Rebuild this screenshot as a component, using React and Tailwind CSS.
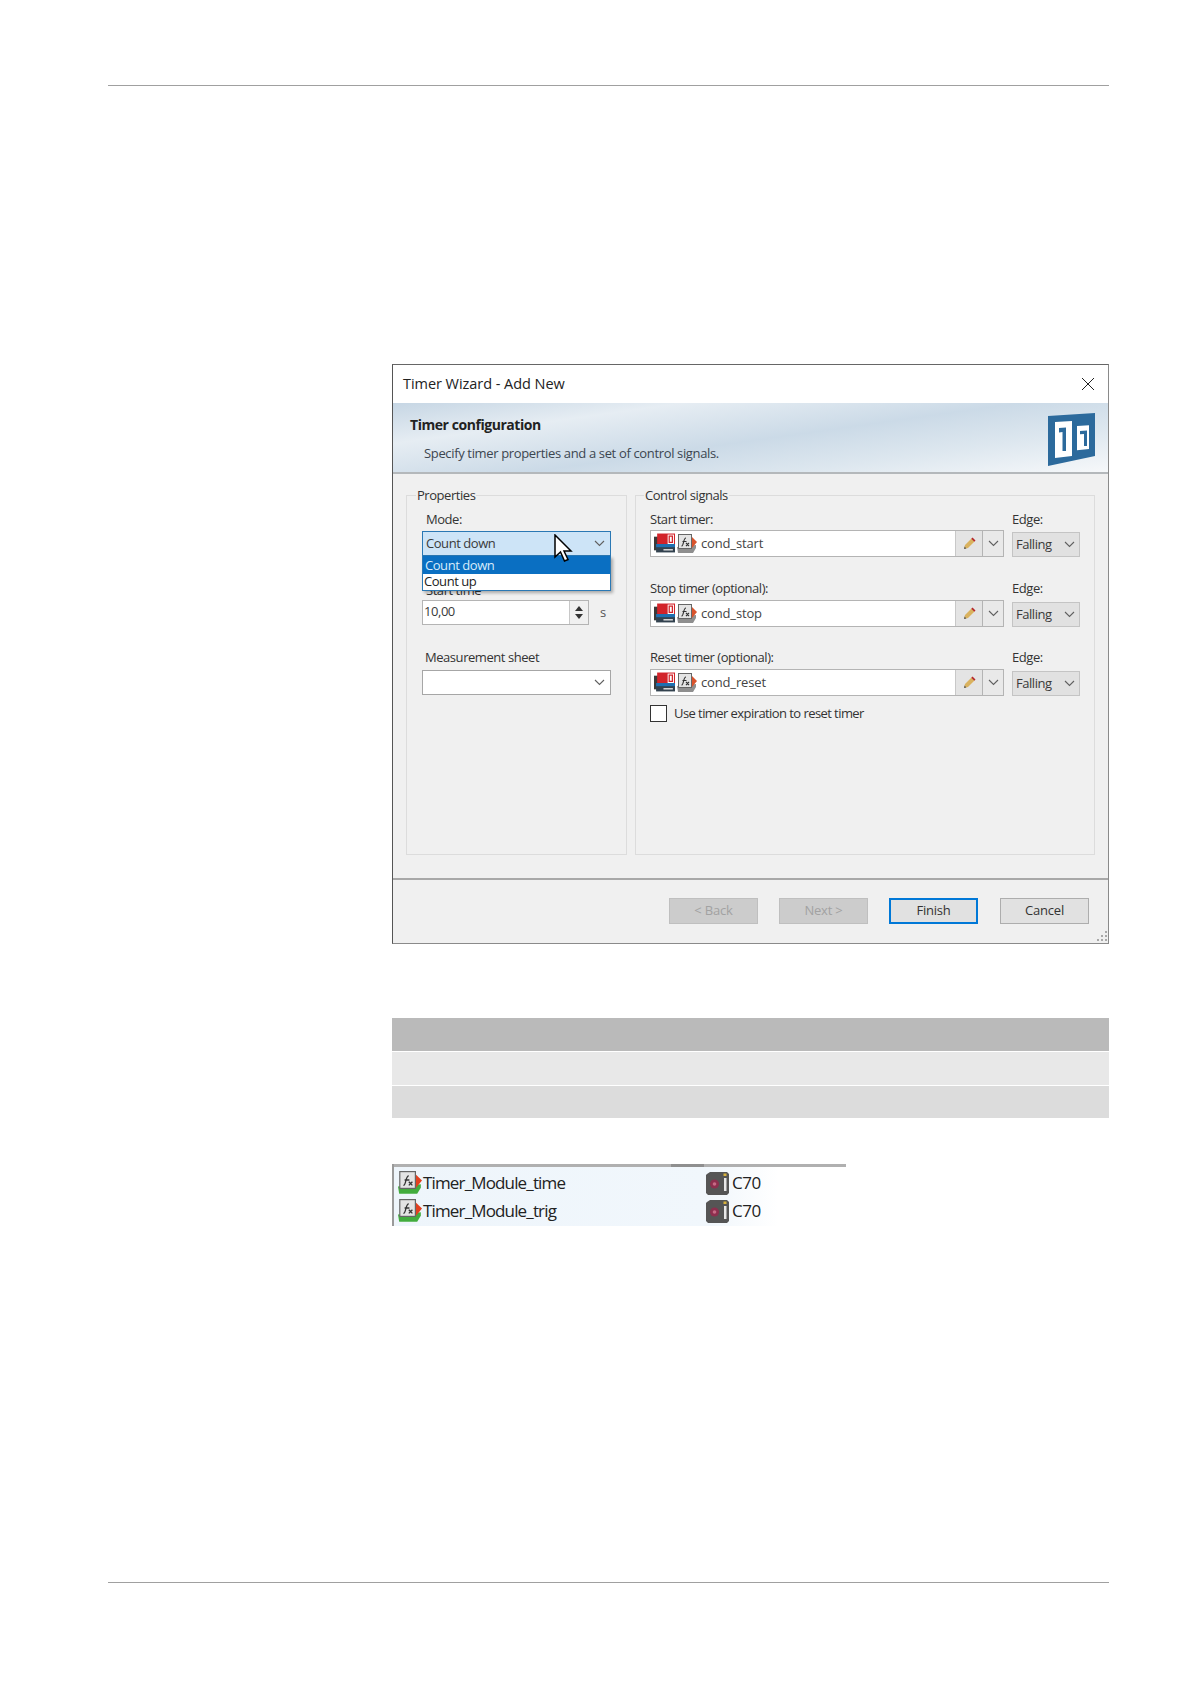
const font = "font-['Open_Sans','Noto_Sans',sans-serif]";

const Chevron = ({ className = "" }) => (
    <svg width="11" height="7" viewBox="0 0 11 7" className={className}>
        <path d="M1 1l4.5 4.5L10 1" fill="none" stroke="#606060" strokeWidth="1.1" />
    </svg>
);

// red/blue memory block in front of each signal
const SourceIcon = () => (
    <svg width="21" height="21" viewBox="1 1 20 19" className="shrink-0">
        <path d="M1 4h6v13H1z" fill="#3a3a3a" />
        <path d="M4 1h17v12H4z" fill="#d2232a" />
        <rect x="14" y="2" width="6" height="9" fill="#fff" />
        <path d="M15.500 3.500h3v6h-3z" fill="none" stroke="#d2232a" strokeWidth="1.2" />
        <path d="M3 11h18v4H3z" fill="#1f6fb0" />
        <path d="M3 14h18v5H3z" fill="#33424f" />
        <path d="M10 16.500h9" stroke="#e6e6e6" strokeWidth="1.3" />
    </svg>
);

const FormulaIcon = ({ bottom = "#8f8f8f", side = "#d9532c", size = 20 }) => (
    <svg width={size} height={size} viewBox="1 0 20 20" className="shrink-0">
        <path d="M1 13l1 6h15l3-5v-3z" fill={bottom} />
        <path d="M15 2l6 6-5 6h-2z" fill={side} />
        <rect x="2.500" y="0.500" width="13" height="14" fill="#e4e4e4" stroke="#666" />
        <path d="M5.500 12c2.500 0 1.500-8 4.500-8M6.500 7.500h4M10 9l3 3M13 9l-3 3" fill="none" stroke="#333" strokeWidth="1.100" />
    </svg>
);

const Pencil = () => (
    <svg width="15" height="15" viewBox="0 0 15 15">
        <path d="M2 13l1-4 6.500-6.500 3 3L6 12z" fill="#d9b25f" />
        <path d="M2 13l.6-2.400 1.800 1.800z" fill="#555" />
        <path d="M10.500 1.500l3 3-1.200 1.200-3-3z" fill="#b5262b" />
    </svg>
);

const Cursor = () => (
    <svg width="20" height="29" viewBox="0 0 20 29">
        <path d="M2 1v22l5.500-5 4 9 3.500-1.500-4-8.500H18z" fill="#fff" stroke="#000" strokeWidth="1.500" />
    </svg>
);

const Logo = () => (
    <svg width="48" height="54" viewBox="0 0 48 54">
        <path d="M0 3L47 0v43L0 53z" fill="#2c6a9c" />
        <path d="M7 9l17-1v35L7 45z" fill="#fff" />
        <path d="M11 15l7-.5V38h-3.500V19L11 19.500z" fill="#2c6a9c" />
        <path d="M29 13l12-.7V36l-12 1.200z" fill="#fff" />
        <path d="M32 18l7-.5V33h-3V21l-4 .3z" fill="#2c6a9c" />
    </svg>
);

const DeviceIcon = () => (
    <svg width="25" height="25" viewBox="0 0 25 25" className="shrink-0">
        <path d="M2 3l3-2h17l2 2v19l-2 2H3l-2-2V4z" fill="#555" />
        <circle cx="9.500" cy="13" r="4.500" fill="#8d2f4e" />
        <circle cx="9.500" cy="13" r="1.800" fill="#c66a85" />
        <rect x="19" y="7" width="2.500" height="13" fill="#e8e8e8" />
        <rect x="18.500" y="2.500" width="3" height="2.500" fill="#d8b23c" />
    </svg>
);

const Combo = ({ value, active }) => (
    <div className={`flex items-center justify-between w-[189px] h-[25px] pl-[3px] pr-[5px] border ${active ? "bg-[#cde4f7] border-[#2a78b4]" : "bg-white border-[#a6a6a6]"}`}>
        <span className="text-[#3a3a3a]">{value}</span>
        <Chevron />
    </div>
);

const SignalRow = ({ label, value, fieldTop = "mt-[4px]", edgeTop = "mt-[6px]", className = "" }) => (
    <div className={`grid grid-cols-[354px_68px] gap-x-[8px] ${className}`}>
        <div className="leading-[16px]">{label}</div>
        <div className="leading-[16px]">Edge:</div>
        <div className={`${fieldTop} flex h-[27px] border border-[#b4b4b4] bg-white`}>
            <div className="flex flex-1 items-center gap-[2px] pl-[3px]">
                <SourceIcon />
                <FormulaIcon />
                <span className="ml-[2px] tracking-[-0.15px] text-[#444]">{value}</span>
            </div>
            <div className="flex w-[27px] items-center justify-center bg-[#e4e4e4] border-l border-[#c8c8c8]">
                <Pencil />
            </div>
            <div className="flex w-[21px] items-center justify-center bg-[#e9e9e9] border-l border-[#b4b4b4]">
                <Chevron />
            </div>
        </div>
        <div className={`${edgeTop} flex h-[25px] items-center justify-between pl-[3px] pr-[4px] bg-[#e1e1e1] border border-[#c4c4c4]`}>
            <span className="text-[#3a3a3a]">Falling</span>
            <Chevron />
        </div>
    </div>
);

const Button = ({ children, disabled, focused, className = "" }) => (
    <div className={`flex h-[26px] w-[89px] items-center justify-center border tracking-[-0.2px] ${disabled ? "bg-[#cccccc] border-[#bfbfbf] text-[#a2a2a2]" : focused ? "bg-[#e1e1e1] border-2 border-[#0078d7]" : "bg-[#e1e1e1] border-[#adadad]"} ${className}`}>
        {children}
    </div>
);

const TreeRow = ({ name }) => (
    <div className="flex h-[28px] items-center">
        <div className="flex w-[311px] items-center pl-[4px]">
            <FormulaIcon bottom="#42ac3d" side="#e2401f" size={24} />
            <span className="ml-[1px] tracking-[-0.85px] text-[#222]">{name}</span>
        </div>
        <DeviceIcon />
        <span className="ml-[2px] tracking-[-0.5px] text-[#222]">C70</span>
    </div>
);

const App = () => {
    return (
        <div className={`${font} h-[1684px] w-[1191px] overflow-hidden bg-white pt-[85px] text-[13px] tracking-[-0.45px] text-[#333]`}>
            <div className="ml-[108px] mr-[82px] h-px bg-[#a0a0a0]" />

            {/* Wizard window */}
            <div className="ml-[392px] mt-[278px] h-[580px] w-[717px] border border-[#8a8a8a] border-t-[#666] border-l-[#555] bg-[#f0f0f0]">
                <div className="flex h-[38px] items-center justify-between bg-white pl-[10px] pr-[13px]">
                    <span className="text-[14.500px] tracking-[-0.05px] text-[#222]">Timer Wizard - Add New</span>
                    <svg width="14" height="14" viewBox="0 0 14 14">
                        <path d="M1 1l12 12M13 1L1 13" stroke="#222" strokeWidth="1" />
                    </svg>
                </div>

                <div className="flex h-[71px] items-start justify-between border-b-2 border-[#b4b8bb] bg-[linear-gradient(172deg,#c6d6e4_0%,#e6edf3_24%,#cbdae7_52%,#dde7ef_74%,#f6f8fa_100%)]">
                    <div className="pl-[17px] pt-[13px]">
                        <div className="text-[14px] font-bold leading-[18px] tracking-[-0.45px] text-[#222]">Timer configuration</div>
                        <div className="ml-[14px] mt-[10px] leading-[18px] tracking-[-0.35px] text-[#3c4650]">Specify timer properties and a set of control signals.</div>
                    </div>
                    <div className="mr-[12px] mt-[10px]">
                        <Logo />
                    </div>
                </div>

                <div className="flex h-[406px] gap-[8px] border-b-2 border-[#a8a8a8] px-[13px] pt-[12px]">
                    <fieldset className="relative h-[369px] w-[221px] border border-[#dcdcdc] px-[15px]">
                        <legend className="ml-[-6px] px-[1px] leading-[18px]">Properties</legend>
                        <div className="ml-[4px] mt-[7px] leading-[16px]">Mode:</div>
                        <div className="relative mt-[4px]">
                            <Combo value="Count down" active />
                            <div className="absolute left-0 top-[25px] z-10 h-[35px] w-[189px] border border-[#2a78b4] border-t-0 bg-white shadow-[2px_2px_3px_rgba(0,0,0,0.3)]">
                                <div className="h-[18px] bg-[#0a6fc2] pl-[2px] leading-[18px] text-[#d8ecfb]">Count down</div>
                                <div className="pl-[1px] leading-[15px] text-[#222]">Count up</div>
                            </div>
                            <div className="absolute left-[131px] top-[3px] z-20">
                                <Cursor />
                            </div>
                        </div>
                        <div className="ml-[4px] mt-[26px] leading-[16px]">Start time</div>
                        <div className="mt-[2px] flex items-center">
                            <div className="flex h-[25px] w-[167px] border border-[#b4b4b4] bg-white">
                                <span className="flex-1 pl-[1px] leading-[21px] text-[#3a3a3a]">10,00</span>
                                <div className="flex w-[19px] flex-col items-center justify-center gap-[3px] border-l border-[#c8c8c8] bg-[#f0f0f0]">
                                    <svg width="8" height="5" viewBox="0 0 8 5"><path d="M4 0l4 5H0z" fill="#333" /></svg>
                                    <svg width="8" height="5" viewBox="0 0 8 5"><path d="M4 5L8 0H0z" fill="#333" /></svg>
                                </div>
                            </div>
                            <span className="ml-[11px] text-[#555]">s</span>
                        </div>
                        <div className="ml-[3px] mt-[24px] leading-[16px]">Measurement sheet</div>
                        <div className="mt-[5px]">
                            <Combo value="" />
                        </div>
                    </fieldset>

                    <fieldset className="h-[369px] w-[461px] border border-[#dcdcdc] pl-[14px]">
                        <legend className="ml-[-6px] px-[1px] leading-[18px]">Control signals</legend>
                        <SignalRow label="Start timer:" value="cond_start" fieldTop="mt-[3px]" edgeTop="mt-[5px]" className="mt-[7px]" />
                        <SignalRow label="Stop timer (optional):" value="cond_stop" className="mt-[23px]" />
                        <SignalRow label="Reset timer (optional):" value="cond_reset" className="mt-[22px]" />
                        <div className="mt-[8px] flex items-center gap-[7px]">
                            <div className="h-[17px] w-[17px] border border-[#333] bg-white" />
                            <span className="tracking-[-0.57px]">Use timer expiration to reset timer</span>
                        </div>
                    </fieldset>
                </div>

                <div className="relative flex justify-end gap-[21px] pr-[19px] pt-[18px]">
                    <Button disabled>&lt; Back</Button>
                    <Button disabled>Next &gt;</Button>
                    <Button focused>Finish</Button>
                    <Button className="ml-px">Cancel</Button>
                    <svg width="12" height="12" viewBox="0 0 12 12" className="absolute bottom-[-18px] right-0">
                        <path d="M9 1h2v2H9zM5 5h2v2H5zM9 5h2v2H9zM1 9h2v2H1zM5 9h2v2H5zM9 9h2v2H9z" fill="#a8a8a8" />
                    </svg>
                </div>
            </div>

            {/* Empty table */}
            <div className="ml-[392px] mt-[74px] w-[717px]">
                <div className="h-[33px] bg-[#bababa]" />
                <div className="mt-px h-[33px] bg-[#e8e8e8]" />
                <div className="mt-px h-[32px] bg-[#dcdcdc]" />
            </div>

            {/* Signal tree */}
            <div className="ml-[392px] mt-[46px] h-[62px] w-[454px] border-l-2 border-[#9a9a9a] bg-[linear-gradient(90deg,#eef5fb_0%,#f1f7fc_70%,#ffffff_85%)] text-[17px]">
                <div className="mb-[2px] flex h-[3px] bg-[#b0b0b0]">
                    <div className="ml-[277px] w-[33px] bg-[#8f8f8f]" />
                </div>
                <TreeRow name="Timer_Module_time" />
                <TreeRow name="Timer_Module_trig" />
            </div>

            <div className="ml-[108px] mr-[82px] mt-[356px] h-px bg-[#a0a0a0]" />
        </div>
    );
};

export default App;
